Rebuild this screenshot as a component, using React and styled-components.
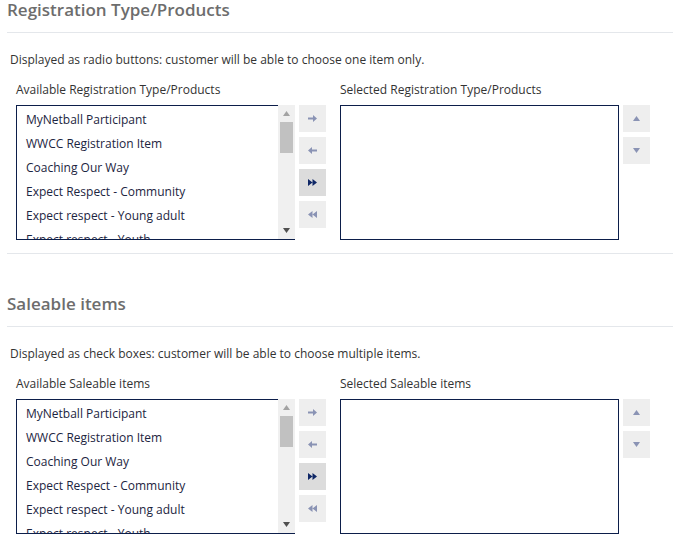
import React from "react";
import styled, { createGlobalStyle } from "styled-components";

const Global = createGlobalStyle`
  html, body { margin: 0; padding: 0; background: #fff; }
  body { font-family: "Open Sans", "Noto Sans", sans-serif; overflow: hidden; }
`;

const Page = styled.div`
  padding-left: 7px;
`;

const Section = styled.section`
  border-bottom: 1px solid #e4e7eb;
  padding-bottom: 13px;
  margin-top: ${(p) => (p.$first ? "0" : "40px")};
`;

const Title = styled.h3`
  margin: 0;
  font-size: 17px;
  line-height: 20px;
  font-weight: 600;
  color: #6d6d6d;
  padding-bottom: 12px;
  border-bottom: 1px solid #e4e7eb;
`;

const Description = styled.p`
  margin: 18px 0 0 3px;
  font-size: 12px;
  line-height: 18px;
  color: #333;
`;

const Row = styled.div`
  display: flex;
  margin-top: 12px;
  padding-left: 9px;
`;

const Column = styled.div`
  display: flex;
  flex-direction: column;
  width: 279px;
`;

const Label = styled.div`
  font-size: 12px;
  line-height: 18px;
  color: #333;
  margin-bottom: 6px;
`;

const ListBox = styled.div`
  display: flex;
  height: 135px;
`;

const List = styled.ul`
  flex: 1;
  margin: 0;
  padding: 2px 0 0 9px;
  list-style: none;
  border: 1px solid #0c1e4a;
  border-right: none;
  overflow: hidden;
`;

const Item = styled.li`
  font-size: 12px;
  line-height: 24px;
  height: 24px;
  color: #1c2541;
  white-space: nowrap;
`;

const Scrollbar = styled.div`
  width: 17px;
  background: #f0f0f0;
  border-bottom: 1px solid #0c1e4a;
  display: flex;
  flex-direction: column;
  align-items: center;
`;

const ScrollArrow = styled.div`
  height: 17px;
  width: 17px;
  display: flex;
  align-items: center;
  justify-content: center;
`;

const Thumb = styled.div`
  width: 13px;
  height: 31px;
  background: #c1c1c1;
`;

const Spacer = styled.div`
  flex: 1;
`;

const Buttons = styled.div`
  display: flex;
  flex-direction: column;
  gap: 5px;
  margin: 24px ${(p) => p.$right ?? 0}px 0 4px;
`;

const Btn = styled.button`
  width: 27px;
  height: 27px;
  padding: 0;
  border: none;
  background: ${(p) => (p.$active ? "#dcdcdc" : "#eeeeee")};
  display: flex;
  align-items: center;
  justify-content: center;
`;

const Selected = styled.div`
  height: 133px;
  border: 1px solid #0c1e4a;
  background: #fff;
`;

const ICON = "#8a93b4";

const ArrowRight = () => (
  <svg width="9" height="7" viewBox="0 0 9 7">
    <path d="M0 2.5h5V0l4 3.5L5 7V4.5H0z" fill={ICON} />
  </svg>
);
const ArrowLeft = () => (
  <svg width="9" height="7" viewBox="0 0 9 7">
    <path d="M9 2.5H4V0L0 3.5 4 7V4.5h5z" fill={ICON} />
  </svg>
);
const FastFwd = () => (
  <svg width="9" height="7" viewBox="0 0 9 7">
    <path d="M0 0l4.5 3.5L0 7z M4.5 0L9 3.5 4.5 7z" fill="#0f2766" />
  </svg>
);
const Rewind = () => (
  <svg width="9" height="7" viewBox="0 0 9 7">
    <path d="M4.5 0L0 3.5 4.5 7z M9 0L4.5 3.5 9 7z" fill={ICON} />
  </svg>
);
const Up = ({ c = ICON }) => (
  <svg width="7" height="5" viewBox="0 0 7 5">
    <path d="M0 5L3.5 0 7 5z" fill={c} />
  </svg>
);
const Down = ({ c = ICON }) => (
  <svg width="7" height="5" viewBox="0 0 7 5">
    <path d="M0 0h7L3.5 5z" fill={c} />
  </svg>
);

const items = [
  "MyNetball Participant",
  "WWCC Registration Item",
  "Coaching Our Way",
  "Expect Respect - Community",
  "Expect respect - Young adult",
  "Expect respect - Youth",
];

const Block = ({ first, title, desc, available, selected }) => (
  <Section $first={first}>
    <Title>{title}</Title>
    <Description>{desc}</Description>
    <Row>
      <Column>
        <Label>{available}</Label>
        <ListBox>
          <List>
            {items.map((t) => (
              <Item key={t}>{t}</Item>
            ))}
          </List>
          <Scrollbar>
            <ScrollArrow>
              <Up c="#a3a3a3" />
            </ScrollArrow>
            <Thumb />
            <Spacer />
            <ScrollArrow>
              <Down c="#505050" />
            </ScrollArrow>
          </Scrollbar>
        </ListBox>
      </Column>
      <Buttons $right={14}>
        <Btn><ArrowRight /></Btn>
        <Btn><ArrowLeft /></Btn>
        <Btn $active><FastFwd /></Btn>
        <Btn><Rewind /></Btn>
      </Buttons>
      <Column>
        <Label>{selected}</Label>
        <Selected />
      </Column>
      <Buttons>
        <Btn><Up /></Btn>
        <Btn><Down /></Btn>
      </Buttons>
    </Row>
  </Section>
);

export default function App() {
  return (
    <>
      <Global />
      <Page>
        <Block
          first
          title="Registration Type/Products"
          desc="Displayed as radio buttons: customer will be able to choose one item only."
          available="Available Registration Type/Products"
          selected="Selected Registration Type/Products"
        />
        <Block
          title="Saleable items"
          desc="Displayed as check boxes: customer will be able to choose multiple items."
          available="Available Saleable items"
          selected="Selected Saleable items"
        />
      </Page>
    </>
  );
}
